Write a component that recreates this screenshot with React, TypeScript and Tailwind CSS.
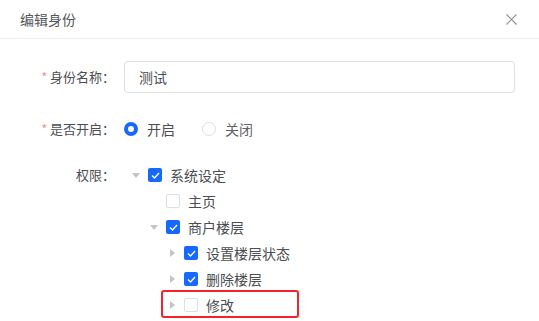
import React from "react";

const font = { fontFamily: '"Noto Sans CJK SC", "Noto Sans", sans-serif' };

function Caret({ dir }: { dir: "down" | "right" | "none" }) {
  return (
    <span className="flex h-[26px] w-[24px] shrink-0 items-center justify-center">
      {dir === "down" && (
        <svg width="8" height="5" viewBox="0 0 8 5">
          <path d="M0 0 L8 0 L4 5 Z" fill="#c0c4cc" />
        </svg>
      )}
      {dir === "right" && (
        <svg width="5" height="8" viewBox="0 0 5 8">
          <path d="M0 0 L5 4 L0 8 Z" fill="#c0c4cc" />
        </svg>
      )}
    </span>
  );
}

function Checkbox({ checked }: { checked: boolean }) {
  return checked ? (
    <span className="flex h-[14px] w-[14px] shrink-0 items-center justify-center rounded-[2px] bg-[#1668ff]">
      <svg width="9" height="7" viewBox="0 0 9 7">
        <path d="M1 3.5 L3.5 6 L8 1" fill="none" stroke="#fff" strokeWidth="1.3" />
      </svg>
    </span>
  ) : (
    <span className="h-[14px] w-[14px] shrink-0 rounded-[2px] border border-[#dcdfe6] bg-white" />
  );
}

function TreeRow({
  level,
  caret,
  checked,
  label,
  highlight,
}: {
  level: number;
  caret: "down" | "right" | "none";
  checked: boolean;
  label: string;
  highlight?: boolean;
}) {
  const pad = level === 0 ? "pl-0" : level === 1 ? "pl-[18px]" : "pl-[36px]";
  return (
    <div className={`relative flex h-[26px] items-center ${pad}`}>
      <Caret dir={caret} />
      <Checkbox checked={checked} />
      <span className="ml-2 text-[14px] text-[#4b4d52]">{label}</span>
      {highlight && (
        <div className="absolute left-[37px] top-[-2px] h-[28px] w-[138px] rounded-[3px] border-2 border-[#f5222d]" />
      )}
    </div>
  );
}

export default function App() {
  return (
    <div className="h-[321px] w-[539px] overflow-hidden bg-white" style={font}>
      <div className="flex h-[39px] items-center justify-between border-b border-[#ebeef5] pl-5 pr-[22px]">
        <span className="text-[14px] text-[#55575c]">编辑身份</span>
        <svg width="11" height="11" viewBox="0 0 11 11">
          <path d="M0.5 0.5 L10.5 10.5 M10.5 0.5 L0.5 10.5" stroke="#909399" strokeWidth="1.1" />
        </svg>
      </div>

      <div className="mt-[22px] flex items-center">
        <div className="w-[124px] shrink-0 pr-[9px] text-right text-[13px] text-[#4b4d52]">
          <span className="mr-[3px] text-[12px] text-[#f78989]">*</span>身份名称：
        </div>
        <div className="flex h-[32px] w-[391px] items-center rounded-[4px] border border-[#dcdfe6] px-[14px] text-[14px] text-[#4b4d52]">
          测试
        </div>
      </div>

      <div className="mt-[20px] flex h-[32px] items-center">
        <div className="w-[124px] shrink-0 pr-[9px] text-right text-[13px] text-[#4b4d52]">
          <span className="mr-[3px] text-[12px] text-[#f78989]">*</span>是否开启：
        </div>
        <div className="flex items-center">
          <span className="h-[14px] w-[14px] rounded-full border-[4px] border-[#1668ff] bg-white" />
          <span className="ml-[9px] text-[14px] text-[#4b4d52]">开启</span>
        </div>
        <div className="ml-[27px] flex items-center">
          <span className="h-[14px] w-[14px] rounded-full border border-[#dcdfe6] bg-white" />
          <span className="ml-[9px] text-[14px] text-[#606266]">关闭</span>
        </div>
      </div>

      <div className="mt-[17px] flex">
        <div className="flex h-[26px] w-[124px] shrink-0 items-center justify-end pr-[9px] text-[13px] text-[#4b4d52]">
          权限：
        </div>
        <div className="flex flex-col">
          <TreeRow level={0} caret="down" checked label="系统设定" />
          <TreeRow level={1} caret="none" checked={false} label="主页" />
          <TreeRow level={1} caret="down" checked label="商户楼层" />
          <TreeRow level={2} caret="right" checked label="设置楼层状态" />
          <TreeRow level={2} caret="right" checked label="删除楼层" />
          <TreeRow level={2} caret="right" checked={false} label="修改" highlight />
        </div>
      </div>
    </div>
  );
}
